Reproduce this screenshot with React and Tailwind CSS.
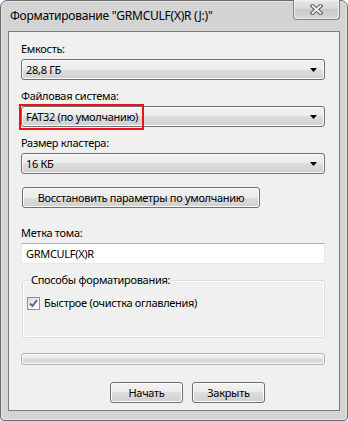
import React from 'react';

const combo =
  'relative h-[21px] rounded-[3px] border border-[#707070] bg-[linear-gradient(to_bottom,#f2f2f2_0%,#ebebeb_50%,#dddddd_50%,#cfcfcf_100%)] shadow-[inset_0_0_0_1px_#fbfbfb] flex items-center pl-[4px] text-black';

const button =
  'h-[21px] rounded-[3px] border border-[#707070] bg-[linear-gradient(to_bottom,#f2f2f2_0%,#ebebeb_50%,#dddddd_50%,#cfcfcf_100%)] shadow-[inset_0_0_0_1px_#fbfbfb] flex items-center justify-center whitespace-nowrap text-black';

function Arrow() {
  return (
    <svg width="7" height="4" viewBox="0 0 7 4" className="absolute right-[7px] top-[8px]">
      <path d="M0 0H7L3.5 4Z" fill="#000" />
    </svg>
  );
}

function Combo({ value, className = '' }) {
  return (
    <div className={combo + ' ' + className}>
      <span>{value}</span>
      <Arrow />
    </div>
  );
}

export default function App() {
  return (
    <div className="w-[348px] h-[421px] bg-white font-['Noto_Sans',sans-serif] leading-[16px] whitespace-nowrap">
      <div className="h-full rounded-t-[7px] rounded-b-[4px] border border-[#6c6c6c] bg-[#d4d4d4] shadow-[inset_0_0_0_1px_#e6e6e6] flex flex-col px-[7px] pb-[9px]">
        {/* title bar */}
        <div className="relative h-[30px] flex items-center pl-[2px] text-[12px] tracking-[-0.25px] text-black">
          <span className="-mt-[1px]">Форматирование "GRMCULF(X)R (J:)"</span>
          <div className="absolute right-[0px] -top-px w-[47px] h-[20px] rounded-b-[4px] border border-t-0 border-[#808080] bg-[linear-gradient(to_bottom,#e9e9e9,#d6d6d6_50%,#c9c9c9_50%,#d8d8d8)] shadow-[inset_0_0_0_1px_#efefef] flex items-center justify-center">
            <svg width="13" height="11" viewBox="0 0 13 11">
              <path d="M2.5 2L10.5 9M10.5 2L2.5 9" stroke="#5a5a5a" strokeWidth="4" strokeLinecap="square" />
              <path d="M2.5 2L10.5 9M10.5 2L2.5 9" stroke="#f2f2f2" strokeWidth="2" strokeLinecap="square" />
            </svg>
          </div>
        </div>

        {/* client area */}
        <div className="relative flex-1 border border-[#7d7d7d] bg-[#f0f0f0] pl-[12px] pr-[14px] pt-[9px] text-[11px] tracking-[-0.3px] text-black flex flex-col">
          <div>Емкость:</div>
          <Combo value="28,8 ГБ" className="mt-[2px]" />

          <div className="mt-[8px]">Файловая система:</div>
          <Combo value="FAT32 (по умолчанию)" className="mt-[2px]" />

          <div className="mt-[8px]">Размер кластера:</div>
          <Combo value="16 КБ" className="mt-[2px]" />

          <div className="mt-[13px] flex">
            <div className={button + ' w-[238px] ml-[1px]'}>Восстановить параметры по умолчанию</div>
          </div>

          <div className="mt-[17px]">Метка тома:</div>
          <div className="mt-[2px] h-[21px] border border-[#e3e9ef] border-t-[#abadb3] bg-white flex items-center pl-[4px]">
            GRMCULF(X)R
          </div>

          <div className="relative mt-[16px] ml-[1px] h-[58px] rounded-[3px] border border-[#d5dfe5] shadow-[inset_0_0_0_1px_#ffffff]">
            <div className="absolute -top-[9px] left-[6px] px-[2px] bg-[#f0f0f0]">Способы форматирования:</div>
            <div className="absolute left-[4px] top-[14px] flex items-center gap-[4px]">
              <div className="w-[13px] h-[13px] border border-[#8e8f8f] bg-[linear-gradient(135deg,#dcdcdc,#ffffff)] flex items-center justify-center">
                <svg width="9" height="9" viewBox="0 0 9 9">
                  <path d="M1 4.5L3.5 7L8 1" fill="none" stroke="#4a5f97" strokeWidth="1.8" />
                </svg>
              </div>
              <span>Быстрое (очистка оглавления)</span>
            </div>
          </div>

          <div className="mt-[15px] h-[12px] rounded-[3px] border border-[#b2b2b2] bg-[linear-gradient(to_bottom,#f3f3f3,#e6e6e6_50%,#d6d6d6_50%,#dedede)] shadow-[inset_0_0_0_1px_#f7f7f7]" />

          <div className="mt-[17px] flex gap-[9px] ml-[89px]">
            <div className={button + ' w-[73px]'}>Начать</div>
            <div className={button + ' w-[73px]'}>Закрыть</div>
          </div>

          {/* annotation highlight */}
          <div className="absolute left-[10px] top-[72px] w-[125px] h-[26px] border-2 border-[#e8141b]" />
        </div>
      </div>
    </div>
  );
}
